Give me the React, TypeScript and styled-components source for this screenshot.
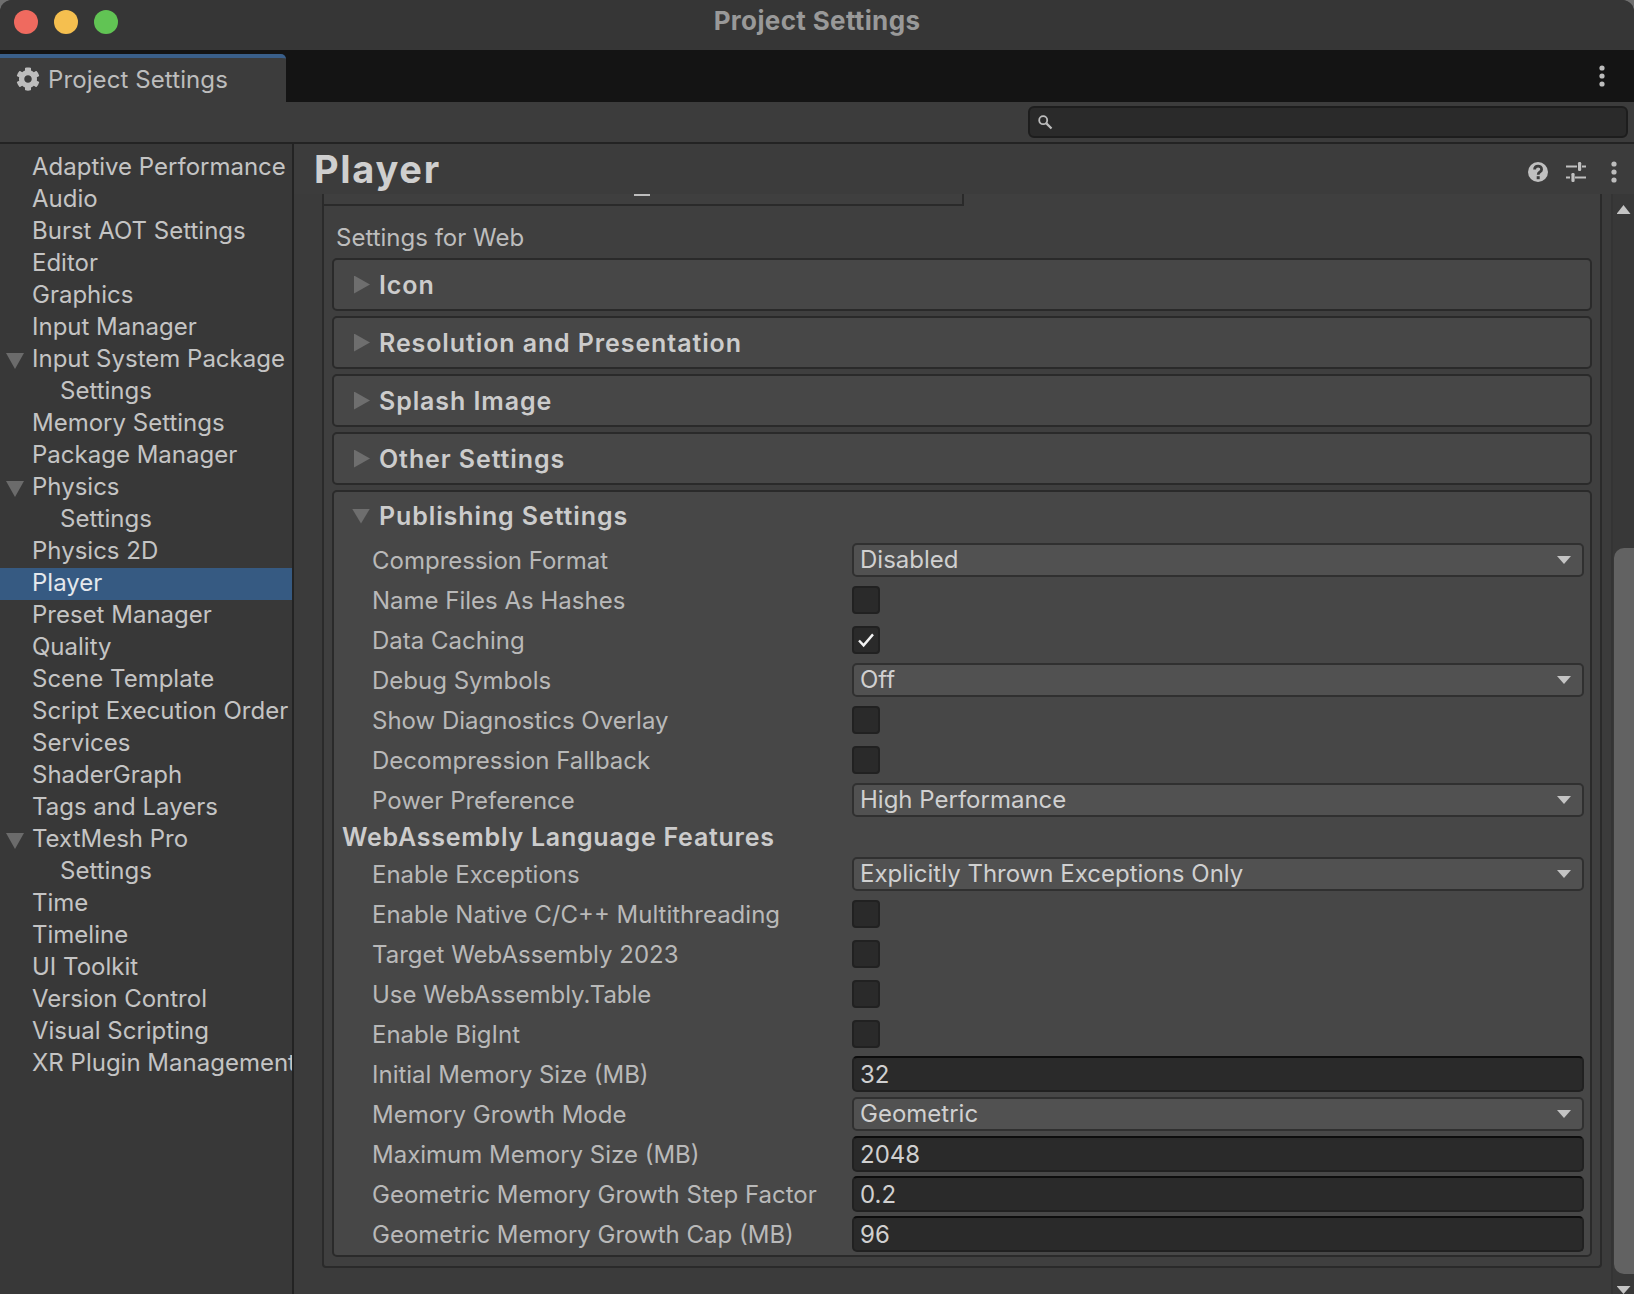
import React from "react";
import styled, { createGlobalStyle } from "styled-components";
import { FaCog } from "react-icons/fa";

const Global = createGlobalStyle`
  html, body { margin: 0; padding: 0; background: #6f6f6f; }
  body { width: 1634px; height: 1294px; overflow: hidden; font-family: Inter, "Noto Sans", sans-serif; }
`;

const Window = styled.div`
  width: 1634px; height: 1294px; display: flex; flex-direction: column; overflow: hidden;
  background: #3c3c3c; border-radius: 12px 12px 0 0; color: #c4c4c4;
`;
const TitleBar = styled.div`
  position: relative; height: 50px; flex: none; display: flex; align-items: center; justify-content: center;
  background: #363636;
`;
const Lights = styled.div`
  position: absolute; left: 14px; top: 10px; display: flex; gap: 16px;
`;
const Light = styled.span<{ $c: string }>`
  width: 24px; height: 24px; border-radius: 50%; background: ${p => p.$c};
`;
const Title = styled.div`
  font-size: 26px; font-weight: 700; letter-spacing: 0.35px; color: #999999; margin-top: -10px;
`;
const TabStrip = styled.div`
  height: 52px; flex: none; background: #141414; display: flex; align-items: stretch; justify-content: space-between;
  padding-top: 4px; box-sizing: border-box; padding-right: 28px;
`;
const Tab = styled.div`
  width: 286px; background: #3c3c3c; border-top: 4px solid #3a5f8a; border-top-right-radius: 5px;
  display: flex; align-items: center; gap: 8px; padding: 0 0 2px 16px; box-sizing: border-box; font-size: 24px; letter-spacing: 0.1px; color: #bdbdbd;
`;
const StripKebab = styled.div`
  display: flex; align-items: center; margin-top: -4px;
`;
const Toolbar = styled.div`
  height: 42px; flex: none; box-sizing: border-box; background: #3c3c3c; border-bottom: 2px solid #232323;
  display: flex; justify-content: flex-end; padding: 4px 6px 4px 0;
`;
const Search = styled.div`
  width: 600px; height: 32px; box-sizing: border-box; background: #2a2a2a; border: 2px solid #1d1d1d; border-radius: 6px;
  display: flex; align-items: center; padding-left: 7px;
`;
const Body = styled.div`
  flex: 1; min-height: 0; display: flex;
`;
const Sidebar = styled.nav`
  width: 294px; flex: none; box-sizing: border-box; background: #383838; border-right: 2px solid #232323; padding-top: 8px; overflow: hidden;
`;
const NavRow = styled.div<{ $active?: boolean; $depth?: number }>`
  height: 32px; box-sizing: border-box; display: flex; align-items: center; white-space: nowrap; font-size: 24px;
  padding: 0 0 3px ${p => (p.$depth ? 60 : 32)}px; position: relative;
  background: ${p => (p.$active ? "#365a82" : "transparent")};
  color: ${p => (p.$active ? "#e4e8ec" : "#c4c4c4")};
`;
const NavArrow = styled.span`
  position: absolute; left: 6px; top: 9px; width: 18px; height: 16px; background: #6b6b6b; clip-path: polygon(0 0, 100% 0, 50% 100%);
`;
const Main = styled.main`
  flex: 1; min-width: 0; display: flex; flex-direction: column;
`;
const Header = styled.header`
  height: 50px; flex: none; display: flex; align-items: center; justify-content: space-between; padding: 0 16px 0 20px; background: #3c3c3c;
`;
const Heading = styled.h1`
  margin: 0; font-size: 38px; font-weight: 700; letter-spacing: 1.7px; color: #cfcfcf; line-height: 50px;
`;
const HeaderIcons = styled.div`
  display: flex; align-items: center; gap: 18px; padding-top: 6px;
`;
const HeaderKebab = styled.span`
  display: flex; margin-left: 6px;
`;
const Scroller = styled.div`
  flex: 1; min-height: 0; display: flex; background: #3b3b3b;
`;
const Content = styled.div`
  flex: 1; min-width: 0; padding: 0 6px 0 28px;
`;
const Inspector = styled.div`
  width: 1280px; box-sizing: border-box; height: 1074px; background: #3f3f3f; border: solid #2a2a2a; border-width: 0 2px 2px 2px;
  border-radius: 0 0 4px 4px; padding: 0 8px;
`;
const TabStub = styled.div`
  height: 12px; width: 640px; margin-left: -8px; box-sizing: border-box; border-bottom: 2px solid #2a2a2a; border-right: 2px solid #2a2a2a;
  display: flex; justify-content: flex-start; padding-left: 310px;
`;
const StubMark = styled.span`
  width: 16px; height: 2px; background: #bdbdbd;
`;
const PlatformLabel = styled.div`
  height: 52px; box-sizing: border-box; padding: 10px 0 0 4px; display: flex; align-items: center; font-size: 24px; color: #bdbdbd;
`;
const Foldout = styled.section<{ $open?: boolean }>`
  box-sizing: border-box; background: #474747; border: 2px solid #2a2a2a; border-radius: 5px; margin-bottom: 5px;
  padding-bottom: ${p => (p.$open ? 1 : 0)}px;
`;
const FoldHead = styled.div<{ $open?: boolean }>`
  height: ${p => (p.$open ? 48 : 49)}px; display: flex; align-items: center; gap: 9px; padding-left: 20px;
  font-size: 25px; font-weight: 600; letter-spacing: 0.9px; color: #cccccc;
`;
const FoldArrow = styled.span<{ $open?: boolean }>`
  width: ${p => (p.$open ? 18 : 16)}px; height: ${p => (p.$open ? 15 : 18)}px; background: #6e6e6e;
  margin-left: ${p => (p.$open ? -2 : 0)}px;
  clip-path: ${p => (p.$open ? "polygon(0 0, 100% 0, 50% 100%)" : "polygon(0 0, 100% 50%, 0 100%)")};
`;
const Row = styled.div`
  height: 40px; display: grid; grid-template-columns: 480px 1fr; align-items: center; padding: 0 6px 0 38px;
`;
const Label = styled.div`
  font-size: 24px; color: #b9b9b9; white-space: nowrap;
`;
const SubHeading = styled.div`
  height: 34px; display: flex; align-items: center; padding-left: 8px; font-size: 25px; font-weight: 600; letter-spacing: 0.75px; color: #cccccc;
`;
const Dropdown = styled.div`
  height: 34px; box-sizing: border-box; background: #515151; border: 2px solid #303030; border-radius: 5px;
  display: flex; align-items: center; justify-content: space-between; padding: 0 11px 2px 6px; font-size: 24px; color: #d0d0d0;
`;
const DropArrow = styled.span`
  width: 14px; height: 8px; margin-top: 2px; background: #c4c4c4; clip-path: polygon(0 0, 100% 0, 50% 100%);
`;
const Input = styled.div`
  height: 36px; box-sizing: border-box; background: #2a2a2a; border: 2px solid #212121; border-top-color: #0d0d0d; border-radius: 5px;
  display: flex; align-items: center; padding-left: 6px; font-size: 24px; color: #d0d0d0;
`;
const Check = styled.div`
  width: 28px; height: 28px; box-sizing: border-box; background: #2a2a2a; border: 2px solid #212121; border-radius: 4px;
  display: flex; align-items: center; justify-content: center;
`;
const Track = styled.aside`
  width: 23px; flex: none; box-sizing: border-box; border-left: 2px solid #343434; background: #383838;
  display: flex; flex-direction: column; align-items: center;
`;
const UpArrow = styled.span`
  width: 14px; height: 9px; margin-top: 11px; background: #c4c4c4; clip-path: polygon(50% 0, 100% 100%, 0 100%);
`;
const Thumb = styled.div`
  width: 20px; height: 726px; margin-top: 334px; background: #626262; border-radius: 10px 0 0 10px; align-self: flex-end;
`;
const DownArrow = styled.span`
  width: 14px; height: 8px; margin-top: 12px; background: #c4c4c4; clip-path: polygon(0 0, 100% 0, 50% 100%);
`;

const Kebab = () => (
  <svg width="8" height="22" viewBox="0 0 8 22" fill="#bdbdbd">
    <circle cx="4" cy="3" r="2.6" /><circle cx="4" cy="11" r="2.6" /><circle cx="4" cy="19" r="2.6" />
  </svg>
);
const SearchIcon = () => (
  <svg width="16" height="16" viewBox="0 0 16 16" fill="none" stroke="#bdbdbd">
    <circle cx="6.2" cy="6.2" r="4" strokeWidth="1.8" /><path d="M9.4 9.4 L14.5 14.5" strokeWidth="2.2" />
  </svg>
);
const HelpIcon = () => (
  <svg width="20" height="20" viewBox="0 0 20 20">
    <circle cx="10" cy="10" r="10" fill="#c0c0c0" />
    <path d="M6.6 7.6 C6.6 3 13.6 3 13.6 7.4 C13.6 10.2 10.2 9.8 10.2 12.8" fill="none" stroke="#3c3c3c" strokeWidth="2.8" />
    <rect x="8.7" y="14.2" width="3" height="3" fill="#3c3c3c" />
  </svg>
);
const SlidersIcon = () => (
  <svg width="20" height="20" viewBox="0 0 20 20" fill="#c0c0c0">
    <rect x="0" y="3.5" width="11" height="2" /><rect x="12" y="0" width="3.2" height="9" rx="1.2" /><rect x="16" y="3.5" width="4" height="2" />
    <rect x="0" y="14.5" width="4" height="2" /><rect x="5.4" y="11" width="3.2" height="9" rx="1.2" /><rect x="9" y="14.5" width="11" height="2" />
  </svg>
);
const Tick = () => (
  <svg width="18" height="16" viewBox="0 0 18 16" fill="none" stroke="#f2f2f2" strokeWidth="2.4">
    <path d="M2 8.5 L6.6 13.4 L16 2.4" />
  </svg>
);

type Nav = { t: string; arrow?: boolean; depth?: number; active?: boolean };
const nav: Nav[] = [
  { t: "Adaptive Performance" }, { t: "Audio" }, { t: "Burst AOT Settings" }, { t: "Editor" }, { t: "Graphics" },
  { t: "Input Manager" }, { t: "Input System Package", arrow: true }, { t: "Settings", depth: 1 }, { t: "Memory Settings" },
  { t: "Package Manager" }, { t: "Physics", arrow: true }, { t: "Settings", depth: 1 }, { t: "Physics 2D" },
  { t: "Player", active: true }, { t: "Preset Manager" }, { t: "Quality" }, { t: "Scene Template" }, { t: "Script Execution Order" },
  { t: "Services" }, { t: "ShaderGraph" }, { t: "Tags and Layers" }, { t: "TextMesh Pro", arrow: true }, { t: "Settings", depth: 1 },
  { t: "Time" }, { t: "Timeline" }, { t: "UI Toolkit" }, { t: "Version Control" }, { t: "Visual Scripting" }, { t: "XR Plugin Management" },
];

type Field = { l: string; k: "drop" | "check" | "input"; v?: string; on?: boolean };
const first: Field[] = [
  { l: "Compression Format", k: "drop", v: "Disabled" }, { l: "Name Files As Hashes", k: "check" }, { l: "Data Caching", k: "check", on: true },
  { l: "Debug Symbols", k: "drop", v: "Off" }, { l: "Show Diagnostics Overlay", k: "check" }, { l: "Decompression Fallback", k: "check" },
  { l: "Power Preference", k: "drop", v: "High Performance" },
];
const second: Field[] = [
  { l: "Enable Exceptions", k: "drop", v: "Explicitly Thrown Exceptions Only" }, { l: "Enable Native C/C++ Multithreading", k: "check" },
  { l: "Target WebAssembly 2023", k: "check" }, { l: "Use WebAssembly.Table", k: "check" }, { l: "Enable BigInt", k: "check" },
  { l: "Initial Memory Size (MB)", k: "input", v: "32" }, { l: "Memory Growth Mode", k: "drop", v: "Geometric" },
  { l: "Maximum Memory Size (MB)", k: "input", v: "2048" }, { l: "Geometric Memory Growth Step Factor", k: "input", v: "0.2" },
  { l: "Geometric Memory Growth Cap (MB)", k: "input", v: "96" },
];

const FieldRow = ({ f }: { f: Field }) => (
  <Row>
    <Label>{f.l}</Label>
    {f.k === "drop" && <Dropdown>{f.v}<DropArrow /></Dropdown>}
    {f.k === "input" && <Input>{f.v}</Input>}
    {f.k === "check" && <Check>{f.on && <Tick />}</Check>}
  </Row>
);

export default function App() {
  return (
    <Window>
      <Global />
      <TitleBar>
        <Lights><Light $c="#ef6a5f" /><Light $c="#f5bf4f" /><Light $c="#61c454" /></Lights>
        <Title>Project Settings</Title>
      </TitleBar>
      <TabStrip>
        <Tab><FaCog size={24} color="#bdbdbd" />Project Settings</Tab>
        <StripKebab><Kebab /></StripKebab>
      </TabStrip>
      <Toolbar><Search><SearchIcon /></Search></Toolbar>
      <Body>
        <Sidebar>
          {nav.map((n, i) => (
            <NavRow key={i} $active={n.active} $depth={n.depth}>
              {n.arrow && <NavArrow />}{n.t}
            </NavRow>
          ))}
        </Sidebar>
        <Main>
          <Header>
            <Heading>Player</Heading>
            <HeaderIcons><HelpIcon /><SlidersIcon /><HeaderKebab><Kebab /></HeaderKebab></HeaderIcons>
          </Header>
          <Scroller>
            <Content>
              <Inspector>
                <TabStub><StubMark /></TabStub>
                <PlatformLabel>Settings for Web</PlatformLabel>
                {["Icon", "Resolution and Presentation", "Splash Image", "Other Settings"].map(t => (
                  <Foldout key={t}><FoldHead><FoldArrow />{t}</FoldHead></Foldout>
                ))}
                <Foldout $open>
                  <FoldHead $open><FoldArrow $open />Publishing Settings</FoldHead>
                  {first.map(f => <FieldRow key={f.l} f={f} />)}
                  <SubHeading>WebAssembly Language Features</SubHeading>
                  {second.map(f => <FieldRow key={f.l} f={f} />)}
                </Foldout>
              </Inspector>
            </Content>
            <Track>
              <UpArrow />
              <Thumb />
              <DownArrow />
            </Track>
          </Scroller>
        </Main>
      </Body>
    </Window>
  );
}
